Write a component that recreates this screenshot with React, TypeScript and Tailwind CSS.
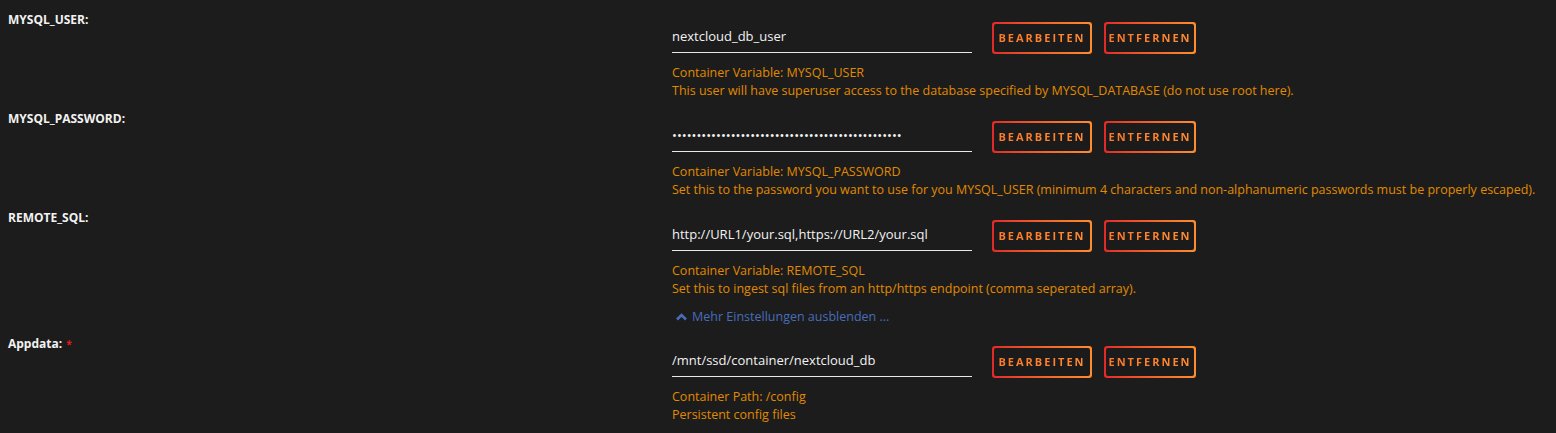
import React from "react";

const ROWS = [
  {
    label: "MYSQL_USER:",
    value: "nextcloud_db_user",
    type: "text",
    help: [
      "Container Variable: MYSQL_USER",
      "This user will have superuser access to the database specified by MYSQL_DATABASE (do not use root here).",
    ],
  },
  {
    label: "MYSQL_PASSWORD:",
    value: "x".repeat(47),
    type: "password",
    help: [
      "Container Variable: MYSQL_PASSWORD",
      "Set this to the password you want to use for you MYSQL_USER (minimum 4 characters and non-alphanumeric passwords must be properly escaped).",
    ],
  },
  {
    label: "REMOTE_SQL:",
    value: "http://URL1/your.sql,https://URL2/your.sql",
    type: "text",
    help: [
      "Container Variable: REMOTE_SQL",
      "Set this to ingest sql files from an http/https endpoint (comma seperated array).",
    ],
  },
];

function GradButton({ children, w }: { children: React.ReactNode; w: string }) {
  return (
    <div className={`rounded-[3px] bg-gradient-to-r from-[#e22828] to-[#ff8c2f] p-[2px] ${w}`}>
      <div className="flex h-[28px] items-center justify-center rounded-[2px] bg-[#1c1b1b]">
        <span className="bg-gradient-to-r from-[#ff7a2a] to-[#ff8c2f] bg-clip-text text-[11px] font-bold tracking-[2px] text-transparent">
          {children}
        </span>
      </div>
    </div>
  );
}

function Row({
  label,
  value,
  type,
  help,
  required,
}: {
  label: string;
  value: string;
  type: string;
  help: string[];
  required?: boolean;
}) {
  return (
    <div className="flex">
      <div className="w-[664px] shrink-0 text-[12px] leading-[18px] font-bold text-[#f2f2f2]">
        {label}
        {required && <span className="ml-1 align-top text-[10px] text-[#e41b1b]">*</span>}
      </div>
      <div className="flex flex-col pt-[11px]">
        <div className="flex items-start">
          <input
            readOnly
            type={type}
            value={value}
            className="h-[31px] w-[300px] border-b border-[#e8e8e8] bg-transparent pb-[2px] text-[13px] text-[#f2f2f2] outline-none"
          />
          <div className="ml-[20px] flex gap-[12px]">
            <GradButton w="w-[100px]">BEARBEITEN</GradButton>
            <GradButton w="w-[92px]">ENTFERNEN</GradButton>
          </div>
        </div>
        <div className="mt-[10px] text-[12.5px] leading-[18px] text-[#e08a00]">
          {help.map((h) => (
            <div key={h} className="whitespace-nowrap">{h}</div>
          ))}
        </div>
      </div>
    </div>
  );
}

export default function App() {
  return (
    <div
      className="min-h-screen bg-[#1c1c1c] px-2 pt-[11px]"
      style={{ fontFamily: '"Open Sans", "Noto Sans", sans-serif' }}
    >
      <div className="flex flex-col gap-[10px]">
        {ROWS.map((r) => (
          <Row key={r.label} {...r} />
        ))}
      </div>
      <div className="mt-[10px] flex h-[18px] items-center pl-[667px] text-[12.5px] text-[#486dba]">
        <svg width="13" height="10" viewBox="0 0 13 10" className="mr-[4px]">
          <path d="M2 7.5 L6.5 3 L11 7.5" fill="none" stroke="#486dba" strokeWidth="2.6" />
        </svg>
        Mehr Einstellungen ausblenden ...
      </div>
      <div className="mt-[9px]">
        <Row
          label="Appdata:"
          value="/mnt/ssd/container/nextcloud_db"
          type="text"
          required
          help={["Container Path: /config", "Persistent config files"]}
        />
      </div>
    </div>
  );
}
